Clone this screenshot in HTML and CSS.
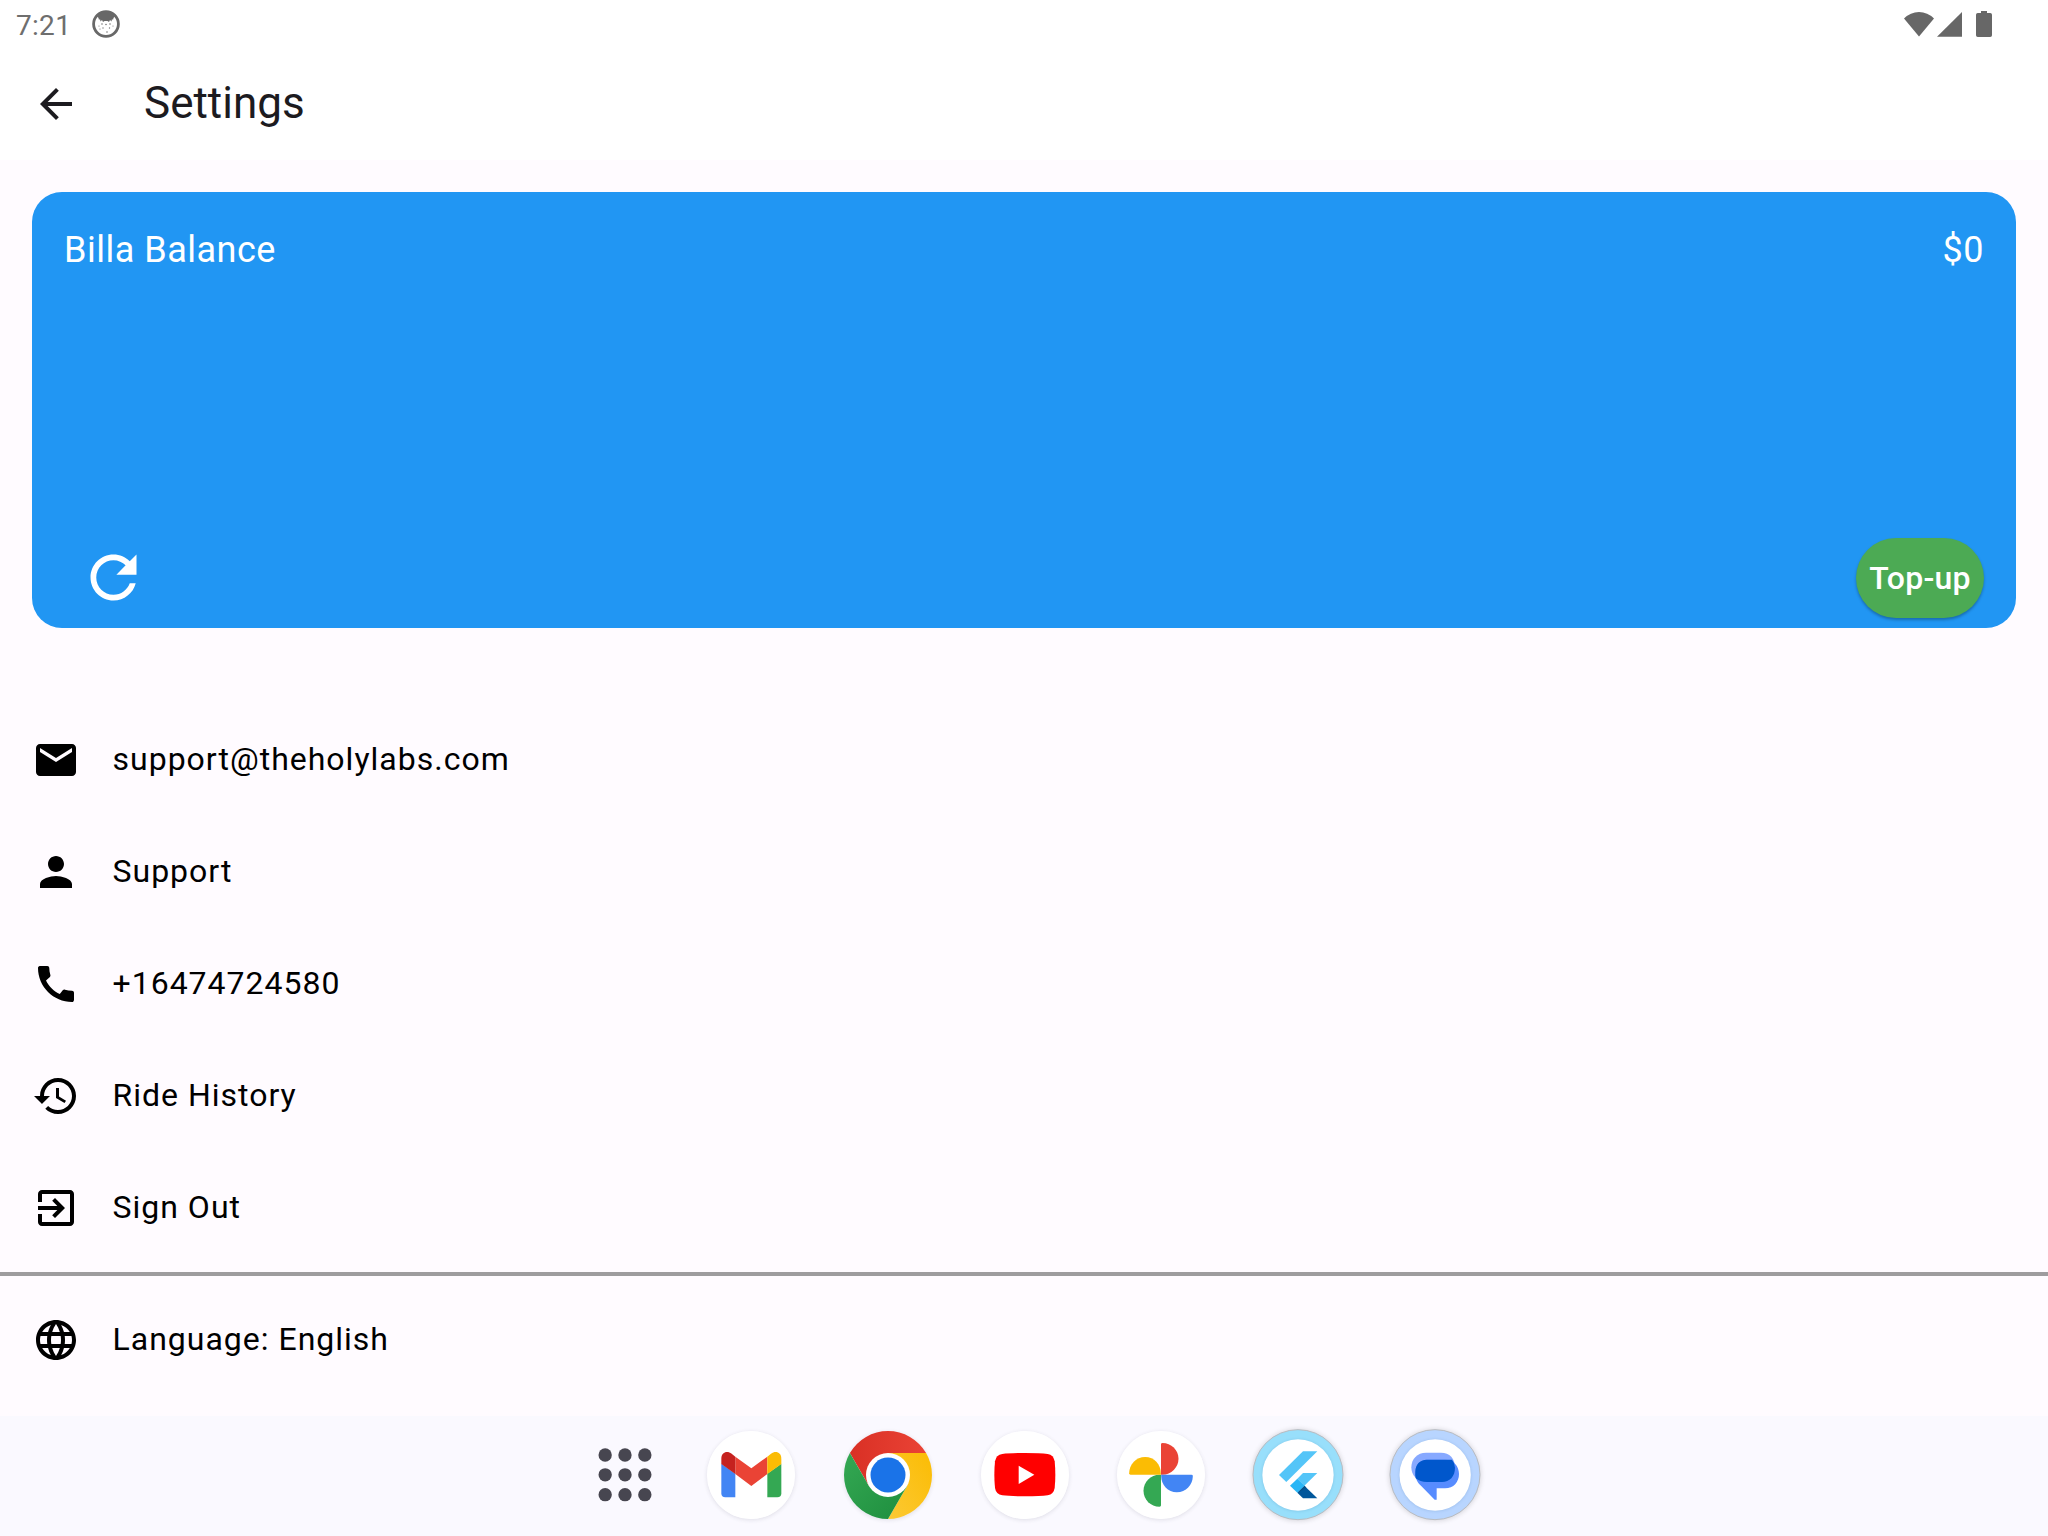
FILE: index.html
```html
<!DOCTYPE html>
<html lang="en">
<head>
<meta charset="utf-8">
<title>Settings</title>
<link rel="stylesheet" href="styles.css">
</head>
<body>
<div class="screen">
  <header class="top">
    <div class="status">
      <span class="clock">7:21</span>
      <svg class="cat" viewBox="0 0 28 28"><circle cx="14" cy="14" r="12.400" fill="#fff" stroke="#686868" stroke-width="2.800"/><path d="M5 6Q9 1 14 1T23 6L21.500 8 21 10 20 9 19.500 11.500 18 10 17 12 15.500 11H12.500L11 12 10 10 8.500 11.500 8 9 7 10 6.500 8Z" fill="#686868"/><g fill="#777"><circle cx="10" cy="14" r=".8"/><circle cx="18" cy="14" r=".8"/><circle cx="14" cy="14.500" r=".8"/><circle cx="7" cy="16" r=".6"/><circle cx="21" cy="16" r=".6"/><circle cx="11" cy="18" r=".7"/><circle cx="17.500" cy="18" r=".7"/><circle cx="15" cy="22" r=".8"/><circle cx="8" cy="19" r=".6"/></g></svg>
      <svg class="signals" viewBox="0 0 90 28" fill="#676767"><path d="M0 8.500Q6.500 2 15 2T30 8.500L15 26.500Z"/><path d="M33 26.700L58 2V26.700Z"/><path d="M77 1h6v2h3.200q1.800 0 1.800 1.800v20.400q0 1.800-1.800 1.800H73.800q-1.800 0-1.800-1.800V4.800Q72 3 73.800 3H77Z"/></svg>
    </div>
    <div class="toolbar">
      <svg class="icon" viewBox="0 0 24 24" fill="#1c1b1f"><path d="M20 11H7.830l5.590-5.590L12 4l-8 8 8 8 1.410-1.410L7.830 13H20v-2z"/></svg>
      <h1 class="title">Settings</h1>
    </div>
  </header>
  <main class="content">
    <section class="card">
      <div class="card-row balance"><span>Billa Balance</span><span class="amount">$0</span></div>
      <div class="card-row actions">
        <svg class="refresh" viewBox="0 0 24 24" fill="#fff"><path d="M17.650 6.350C16.200 4.900 14.210 4 12 4c-4.420 0-7.990 3.580-7.990 8s3.570 8 7.990 8c3.730 0 6.840-2.550 7.730-6h-2.080c-.82 2.330-3.040 4-5.650 4-3.310 0-6-2.690-6-6s2.690-6 6-6c1.660 0 3.140.69 4.220 1.780L13 11h7V4l-2.350 2.350z"/></svg>
        <button class="topup">Top-up</button>
      </div>
    </section>
    <ul class="menu">
      <li class="item"><svg class="icon" viewBox="0 0 24 24"><path d="M20 4H4c-1.100 0-1.990.9-1.990 2L2 18c0 1.100.9 2 2 2h16c1.100 0 2-.9 2-2V6c0-1.100-.9-2-2-2zm0 4l-8 5-8-5V6l8 5 8-5v2z"/></svg><span class="label">support@theholylabs.com</span></li>
      <li class="item"><svg class="icon" viewBox="0 0 24 24"><path d="M12 12c2.210 0 4-1.790 4-4s-1.790-4-4-4-4 1.790-4 4 1.790 4 4 4zm0 2c-2.670 0-8 1.340-8 4v2h16v-2c0-2.660-5.330-4-8-4z"/></svg><span class="label">Support</span></li>
      <li class="item"><svg class="icon" viewBox="0 0 24 24"><path d="M20.010 15.380c-1.230 0-2.420-.2-3.530-.56-.35-.12-.74-.03-1.010.24l-1.570 1.970c-2.830-1.350-5.480-3.900-6.890-6.830l1.950-1.660c.27-.28.35-.67.24-1.020-.37-1.110-.56-2.300-.56-3.530 0-.54-.45-.99-.99-.99H4.190C3.650 3 3 3.240 3 3.990 3 13.280 10.730 21 20.010 21c.71 0 .99-.63.99-1.180v-3.450c0-.54-.45-.99-.99-.99z"/></svg><span class="label">+16474724580</span></li>
      <li class="item"><svg class="icon" viewBox="0 0 24 24"><path d="M13 3c-4.970 0-9 4.030-9 9H1l3.890 3.890.07.14L9 12H6c0-3.870 3.130-7 7-7s7 3.130 7 7-3.130 7-7 7c-1.930 0-3.680-.79-4.940-2.060l-1.420 1.420C8.270 19.990 10.510 21 13 21c4.970 0 9-4.030 9-9s-4.030-9-9-9zm-1 5v5l4.280 2.540.72-1.210-3.500-2.080V8H12z"/></svg><span class="label">Ride History</span></li>
      <li class="item"><svg class="icon" viewBox="0 0 24 24"><path d="M10.090 15.590L11.500 17l5-5-5-5-1.410 1.410L12.670 11H3v2h9.670l-2.580 2.590zM19 3H5c-1.110 0-2 .9-2 2v4h2V5h14v14H5v-4H3v4c0 1.100.89 2 2 2h14c1.100 0 2-.9 2-2V5c0-1.100-.9-2-2-2z"/></svg><span class="label">Sign Out</span></li>
    </ul>
    <hr class="divider">
    <ul class="menu-end">
      <li class="item"><svg class="icon" viewBox="0 0 24 24"><path d="M11.990 2C6.470 2 2 6.480 2 12s4.470 10 9.990 10C17.520 22 22 17.520 22 12S17.520 2 11.990 2zm6.930 6h-2.950c-.32-1.250-.78-2.450-1.380-3.560 1.840.63 3.370 1.910 4.330 3.560zM12 4.040c.83 1.200 1.480 2.530 1.910 3.960h-3.820c.43-1.430 1.080-2.760 1.910-3.960zM4.260 14C4.100 13.360 4 12.690 4 12s.1-1.360.26-2h3.380c-.08.66-.14 1.320-.14 2s.06 1.340.14 2H4.260zm.82 2h2.950c.32 1.250.78 2.450 1.380 3.560-1.840-.63-3.370-1.900-4.330-3.560zm2.950-8H5.080c.96-1.660 2.490-2.930 4.330-3.560C8.810 5.550 8.350 6.750 8.030 8zM12 19.960c-.83-1.200-1.480-2.530-1.910-3.960h3.820c-.43 1.430-1.080 2.760-1.910 3.960zM14.340 14H9.660c-.09-.66-.16-1.320-.16-2s.07-1.350.16-2h4.680c.09.65.16 1.320.16 2s-.07 1.340-.16 2zm.25 5.560c.6-1.110 1.060-2.310 1.380-3.560h2.950c-.96 1.650-2.490 2.930-4.330 3.560zM16.360 14c.08-.66.14-1.320.14-2s-.06-1.340-.14-2h3.380c.16.64.26 1.310.26 2s-.1 1.360-.26 2h-3.380z"/></svg><span class="label">Language: English</span></li>
    </ul>
  </main>
  <nav class="dock">
    <svg class="app launcher" viewBox="4.500 65 264 264" fill="#474650"><circle cx="77" cy="137" r="20"/><circle cx="136.500" cy="137" r="20"/><circle cx="196" cy="137" r="20"/><circle cx="77" cy="196.500" r="20"/><circle cx="136.500" cy="196.500" r="20"/><circle cx="196" cy="196.500" r="20"/><circle cx="77" cy="256" r="20"/><circle cx="136.500" cy="256" r="20"/><circle cx="196" cy="256" r="20"/></svg>
    <svg class="app plate" viewBox="380 65 264 264"><circle cx="512" cy="197" r="132" fill="#fff"/><path d="M423 163L465 193V264H435Q423 264 423 252Z" fill="#4285f4"/><path d="M603 163L561 193V264H591Q603 264 603 252Z" fill="#34a853"/><path d="M465 142L513 177 561 142V194L513 230 465 194Z" fill="#ea4335"/><path d="M423 164V148C423 129 440 123 454 133L465 142V194Z" fill="#c5221f"/><path d="M603 164V148C603 129 586 123 572 133L561 142V194Z" fill="#fbbc04"/></svg>
    <svg class="app plate" viewBox="790.500 65 264 264"><defs><linearGradient id="cr"><stop offset="0" stop-color="#d93025"/><stop offset="1" stop-color="#ea4335"/></linearGradient><linearGradient id="cg" x1="0" y1="0" x2="1" y2="1"><stop offset="0" stop-color="#34a853"/><stop offset="1" stop-color="#1e8e3e"/></linearGradient><linearGradient id="cy" x1="1" y1="0" x2="0" y2="1"><stop offset="0" stop-color="#fbbc04"/><stop offset="1" stop-color="#fcc934"/></linearGradient></defs><path d="M922.500 197L865.300 230 808.200 131A132 132 0 0 1 1036.800 131H922.500Z" fill="url(#cr)"/><path d="M922.500 131H1036.800A132 132 0 0 1 922.500 329L979.700 230 922.500 197Z" fill="url(#cy)"/><path d="M808.200 131L865.300 230 922.500 197 979.700 230 922.500 329A132 132 0 0 1 808.200 131Z" fill="url(#cg)"/><circle cx="922.500" cy="197" r="66" fill="#fff"/><circle cx="922.500" cy="197" r="52.500" fill="#1a73e8"/></svg>
    <svg class="app plate" viewBox="92 65 264 264"><circle cx="224" cy="197" r="132" fill="#fff"/><path d="M224 131Q270 131 292 134 310 137 313 156 317 197 313 236 310 255 292 258 270 261 224 261T156 258Q137 255 134 236 130 197 134 156 137 137 156 134 178 131 224 131Z" fill="red"/><path d="M205 169V224L252 196.500Z" fill="#fff"/></svg>
    <svg class="app plate" viewBox="502.500 65 264 264"><circle cx="634.500" cy="197" r="132" fill="#fff"/><path d="M634.500 196V105Q634.500 101 639 101C665 101 687 122 687 148S665 196 639 196Z" fill="#ea4335"/><path d="M635 196H726Q730 196 730 200C730 227 709 249 682 249S635 227 635 200Z" fill="#4285f4"/><path d="M634.500 196V288Q634.500 292 630 292C604 292 582 271 582 244S604 196 630 196Z" fill="#34a853"/><path d="M634 196H543Q539 196 539 192C539 165 560 143 587 143S634 165 634 192Z" fill="#fbbc04"/></svg>
    <svg class="app ringed" viewBox="73 65 264 264"><circle cx="205" cy="196" r="135" fill="#98dffb" stroke="#b9bcc1" stroke-width="3"/><circle class="inner" cx="205" cy="197" r="107" fill="#fff"/><path d="M220 126H263L170 218 148 197Z" fill="#54c5f8"/><path d="M220 191H263L224 229 203 208Z" fill="#54c5f8"/><path d="M203 250L224 229 263 267H220Z" fill="#01579b"/><path d="M203 208L225 229 203 250 181 229Z" fill="#29b6f6"/><path d="M203 250L225 229 230 235Z" fill="#075086"/></svg>
    <svg class="app ringed" viewBox="484 65 264 264"><circle cx="616" cy="196" r="135" fill="#b8d5ff" stroke="#b9bcc1" stroke-width="3"/><circle class="inner" cx="616.500" cy="197" r="107" fill="#fff"/><path d="M589 130H634C660 130 676 148 676 174S660 217 634 217H589C563 217 545 199 545 174S563 130 589 130Z" fill="#87a9ff"/><path d="M592 151H646C672 151 688 170 688 194S672 237 646 237H621V271H615L574 229C563 219 557 210 557 188 557 166 570 151 592 151Z" fill="#578cff"/><path d="M591 151H667Q676 161 676 175C676 201 660 218 637 218H592Q571 218 558 207 556 198 557 186C558 166 570 151 591 151Z" fill="#0057cc"/></svg>
  </nav>
</div>
</body>
</html>
```
FILE: styles.css
```css
* { box-sizing: border-box; }
body { margin: 0; font-family: Roboto, "Liberation Sans", sans-serif; }
svg { display: block; flex: none; }

.screen { width: 2048px; height: 1536px; display: flex; flex-direction: column; overflow: hidden; background: #fffbff; }
.top { height: 160px; background: #fff; }
.status { height: 48px; display: flex; align-items: center; padding: 0 56px 0 16px; }
.clock { width: 76px; padding-top: 3px; font-size: 28px; line-height: 45px; letter-spacing: .3px; color: #6e6e6e; }
.cat { width: 28px; height: 28px; }
.signals { width: 90px; height: 28px; margin-left: auto; margin-right: -2px; }
.toolbar { height: 112px; display: flex; align-items: center; padding-left: 32px; gap: 64px; }
.title { margin: 0; padding-bottom: 2px; font-size: 44px; font-weight: 400; line-height: 56px; color: #1c1b1f; }
.icon { width: 48px; height: 48px; }

.content { flex: 1; padding-top: 32px; }
.card { height: 436px; margin: 0 32px; padding: 33px 32px 10px; border-radius: 30px; background: #2196f3; display: flex; flex-direction: column; justify-content: space-between; color: #fff; }
.card-row { display: flex; justify-content: space-between; align-items: center; }
.balance { font-size: 36px; line-height: 50px; letter-spacing: .5px; }
.refresh { width: 69px; height: 69px; margin: 0 0 1px 15px; }
.topup { width: 128px; height: 80px; padding: 0; border: 0; border-radius: 40px; background: #4caa54; color: #fff; font: 500 32px Roboto, sans-serif; letter-spacing: .2px; box-shadow: 0 2px 3px rgba(0, 0, 0, .28); }

.menu, .menu-end { list-style: none; margin: 0; padding: 0; }
.menu { margin-top: 76px; }
.item { height: 112px; display: flex; align-items: center; gap: 32.5px; padding-left: 32px; font-size: 32px; line-height: 48px; letter-spacing: 1px; color: #000; }
.label { padding-bottom: 2px; }
.divider { height: 4px; margin: 8px 0; border: 0; background: #9e9c9e; }

.dock { height: 120px; display: flex; align-items: center; padding: 0 0 2px 581px; background: #faf9ff; }
.app { width: 88px; height: 88px; overflow: visible; margin-right: 48.8px; }
.launcher { margin-right: 38px; }
.plate { border-radius: 50%; box-shadow: 0 1px 4px rgba(60, 60, 80, .14); }
.ringed { border-radius: 50%; box-shadow: 0 0 5px 2px rgba(0, 0, 0, .14); }
.inner { filter: drop-shadow(0 1px 5px rgba(0, 60, 120, .16)); }
```
